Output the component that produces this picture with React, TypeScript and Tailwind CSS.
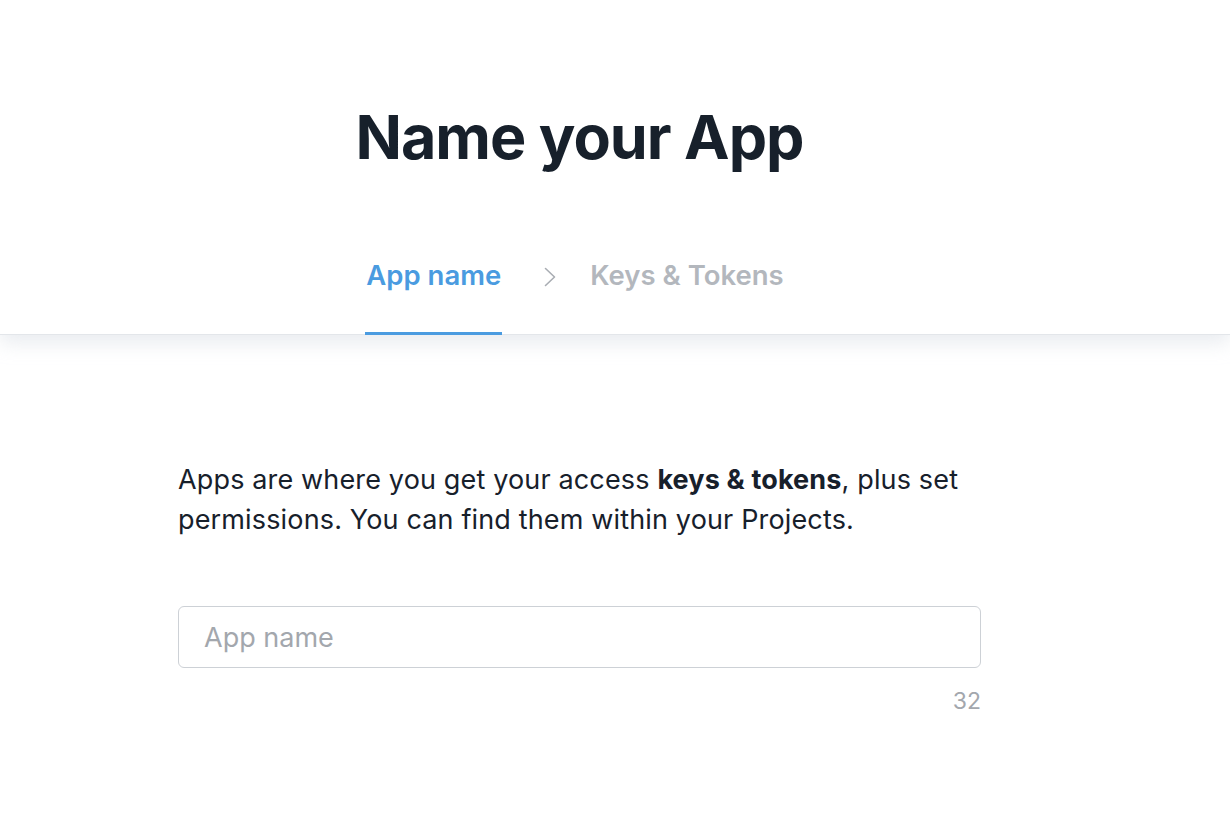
export default function App() {
  return (
    <div className="min-h-screen bg-white font-['Inter',sans-serif] text-[#17202b]">
      <header className="border-b border-[#e3e6ea] bg-white shadow-[0_8px_18px_rgba(200,208,218,0.4)]">
        <div className="ml-[178px] flex w-[803px] flex-col items-center">
          <h1 className="mt-[97px] text-[61px] font-bold leading-[80px] tracking-[-1px]">Name your App</h1>
          <nav className="mr-[10px] mt-[82px] flex items-start text-[27.5px] font-semibold">
            <div className="flex flex-col items-center">
              <span className="px-px pb-[41px] leading-[32px] text-[#4a9be0]">App name</span>
              <span className="-mb-px h-[3px] w-full bg-[#4a9be0]" />
            </div>
            <svg className="ml-[42px] mt-[8px]" width="12" height="20" viewBox="0 0 12 20" fill="none">
              <polyline points="1.5,1.5 10.5,10 1.5,18.5" stroke="#a9adb3" strokeWidth="1.6" strokeLinecap="round" strokeLinejoin="round" />
            </svg>
            <span className="ml-[34px] leading-[32px] text-[#b3b7bd]">Keys &amp; Tokens</span>
          </nav>
        </div>
      </header>

      <main className="ml-[178px] w-[803px] pt-[125px]">
        <p className="text-[27px] leading-[40px] tracking-[0.15px]">
          Apps are where you get your access <b className="font-bold">keys &amp; tokens</b>, plus set permissions. You can find them within your Projects.
        </p>
        <input
          type="text"
          placeholder="App name"
          className="mt-[66px] h-[62px] w-full rounded-[6px] border-[1.5px] border-[#cdd1d6] px-[25px] text-[27px] outline-none placeholder:text-[#a3a7ad]"
        />
        <div className="mt-[19px] text-right text-[23px] leading-[28px] text-[#a3a7ad]">32</div>
      </main>
    </div>
  )
}
